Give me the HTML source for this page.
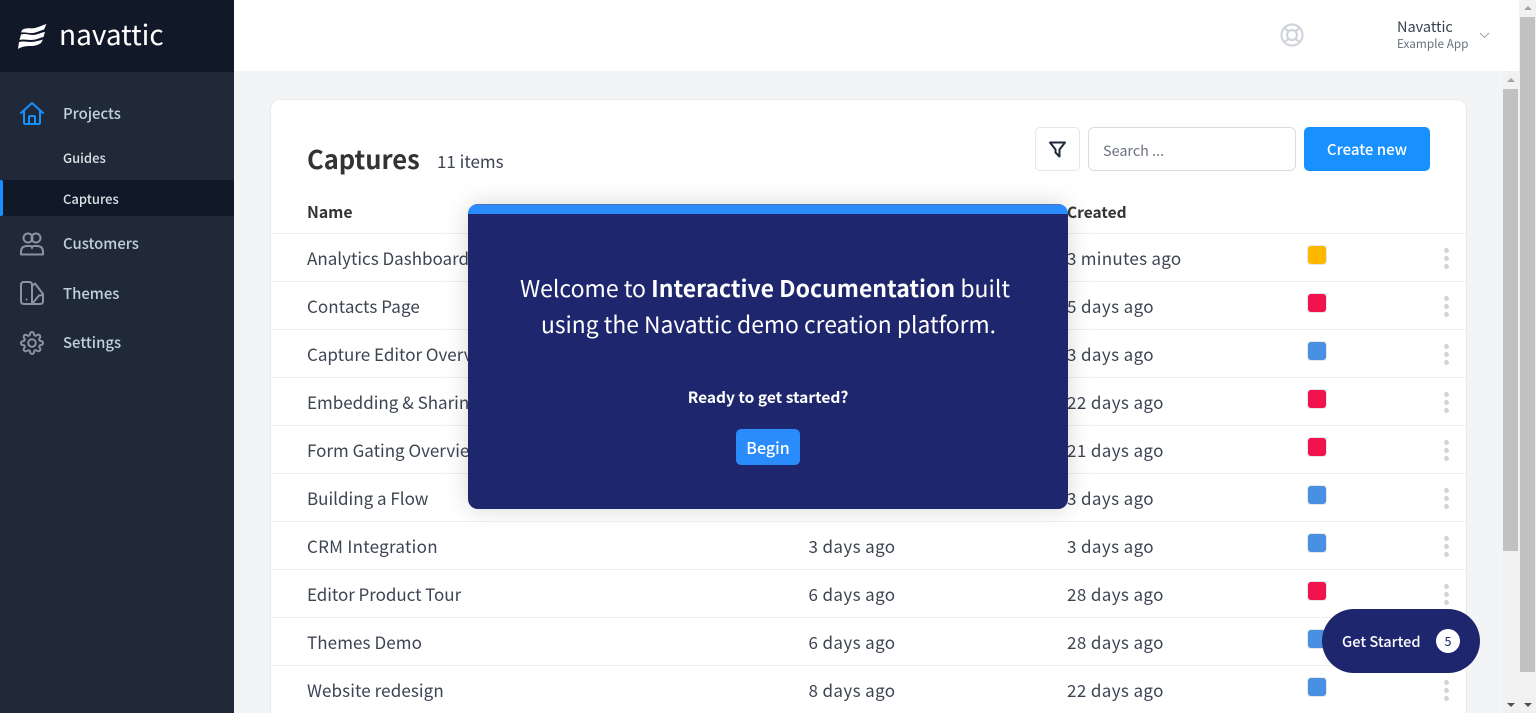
<!DOCTYPE html>
<html><head><meta charset="utf-8"><style>
*{box-sizing:border-box}
html,body{margin:0;padding:0;width:1536px;height:713px;overflow:hidden;background:#f3f4f6}
body{font-family:"Noto Sans CJK SC","Liberation Sans",sans-serif;position:relative}
.a{position:absolute;white-space:nowrap}
.nav{color:#c3d0dc;font-size:14.900px;font-weight:500;line-height:20px;left:63px}
.sub{color:#dbe2e8;font-size:13px;font-weight:500;line-height:18px;left:63px}
.t{color:#3d4451;font-size:17px;line-height:24px;left:307px}
.d{color:#3d4451;font-size:17px;line-height:24px;letter-spacing:.38px}
.l{position:absolute;left:271px;width:1195px;height:1px;background:#eff0f2}
.c{position:absolute;left:1307px;width:20px;height:20px;border-radius:4px;border:1px solid #e5e7eb}
.m{position:absolute;left:1443.5px;width:5px;height:5px;border-radius:50%;background:#d1d5db;box-shadow:0 8px 0 #d1d5db,0 16px 0 #d1d5db}
svg{position:absolute;overflow:visible}
</style></head><body>

<!-- sidebar -->
<div class="a" style="left:0;top:0;width:234px;height:713px;background:#1f2937"></div>
<div class="a" style="left:0;top:0;width:234px;height:72px;background:#111827"></div>
<svg style="left:18px;top:24px" width="29" height="25" viewBox="0 0 29 25" fill="#fff">
<path d="M4 6C8 3 13 5 17 4 21 3 25 1 28.500 0L26 5.500C21 7 17 9.500 12 9 9 8.700 6 8 3 8.500Z"/>
<path d="M3 10.500C7 9 11 11 15 11 19 11 23 8.500 27 8L25.500 13C21 14 18 16 13 16 9 16 5 15 1.500 16Z"/>
<path d="M1 18C5 17 9 18 13 18 17 18 21 16.500 25 15.500L23 19C20 21 17 22 12 22 7 22 3 23 0 25Z"/>
</svg>
<div class="a" style="left:59px;top:14px;color:#fff;font-size:28px;line-height:40px">navattic</div>

<svg style="left:20px;top:101px" width="24" height="24" viewBox="0 0 24 24" fill="none" stroke="#1890ff" stroke-width="2" stroke-linejoin="round" stroke-linecap="round">
<path d="M1 12L12 2 23 12"/><path d="M4 10V21.500Q4 23 5.500 23H18.500Q20 23 20 21.500V10"/><path d="M9 23V16.500Q9 15 10.500 15H13.500Q15 15 15 16.500V23"/>
</svg>
<div class="a nav" style="top:104px">Projects</div>
<div class="a sub" style="top:149px">Guides</div>
<div class="a" style="left:0;top:180px;width:234px;height:36px;background:#111827"></div>
<div class="a" style="left:0;top:180px;width:3px;height:36px;background:#1890ff;border-radius:0 2px 2px 0"></div>
<div class="a sub" style="top:190px">Captures</div>

<svg style="left:20px;top:232px" width="24" height="24" viewBox="0 0 24 24" fill="none" stroke="#8a949f" stroke-width="2" stroke-linejoin="round">
<circle cx="8" cy="6" r="4.500"/><circle cx="16" cy="6" r="4.500"/>
<path d="M1 22.500V20Q1 14 7 14H10Q12 14 12 16 12 14 14 14H17Q23 14 23 20V22.500Z"/>
</svg>
<div class="a nav" style="top:234px">Customers</div>

<svg style="left:20px;top:281px" width="24" height="24" viewBox="0 0 24 24" fill="none" stroke="#8a949f" stroke-width="2" stroke-linejoin="round">
<path d="M4 1H9Q12 1 12 4V23H4Q1 23 1 20V4Q1 1 4 1Z"/>
<path d="M12 5L15 2.500 23 13V20Q23 23 20 23H12"/><path d="M12 23L19 14.500 23 14"/>
<circle cx="6.500" cy="18.500" r="1" fill="#8a949f" stroke="none"/>
</svg>
<div class="a nav" style="top:284px">Themes</div>

<svg style="left:20px;top:331px" width="24" height="24" viewBox="0 0 24 24" fill="none" stroke="#8a949f" stroke-width="2" stroke-linejoin="round">
<circle cx="12" cy="12" r="3.800"/>
<path d="M19.400 15a1.650 1.650 0 0 0 .33 1.820l.06.06a2 2 0 0 1 0 2.830 2 2 0 0 1-2.830 0l-.06-.06a1.650 1.650 0 0 0-1.820-.33 1.650 1.650 0 0 0-1 1.510V21a2 2 0 0 1-2 2 2 2 0 0 1-2-2v-.09A1.650 1.650 0 0 0 9 19.400a1.650 1.650 0 0 0-1.820.33l-.06.06a2 2 0 0 1-2.830 0 2 2 0 0 1 0-2.830l.06-.06a1.650 1.650 0 0 0 .33-1.820 1.650 1.650 0 0 0-1.510-1H3a2 2 0 0 1-2-2 2 2 0 0 1 2-2h.09A1.650 1.650 0 0 0 4.600 9a1.650 1.650 0 0 0-.33-1.820l-.06-.06a2 2 0 0 1 0-2.830 2 2 0 0 1 2.830 0l.06.06a1.650 1.650 0 0 0 1.820.33H9a1.650 1.650 0 0 0 1-1.510V3a2 2 0 0 1 2-2 2 2 0 0 1 2 2v.09a1.650 1.650 0 0 0 1 1.510 1.650 1.650 0 0 0 1.820-.33l.06-.06a2 2 0 0 1 2.830 0 2 2 0 0 1 0 2.830l-.06.06a1.650 1.650 0 0 0-.33 1.820V9a1.650 1.650 0 0 0 1.510 1H21a2 2 0 0 1 2 2 2 2 0 0 1-2 2h-.09a1.650 1.650 0 0 0-1.510 1z"/>
</svg>
<div class="a nav" style="top:333px">Settings</div>

<!-- top bar -->
<div class="a" style="left:234px;top:0;width:1285px;height:71px;background:#fff"></div>
<svg style="left:1280px;top:23px" width="24" height="24" viewBox="0 0 24 24" fill="none" stroke="#d1d5db" stroke-width="2.200">
<circle cx="12" cy="12" r="10.500"/><circle cx="12" cy="12" r="5"/>
<path d="M4.500 4.500L8.500 8.500M19.500 4.500L15.500 8.500M4.500 19.500L8.500 15.500M19.500 19.500L15.500 15.500"/>
</svg>
<div class="a" style="left:1397px;top:17px;color:#374151;font-size:14.500px;line-height:20px">Navattic</div>
<div class="a" style="left:1397px;top:35px;color:#6b7280;font-size:11.800px;line-height:18px">Example App</div>
<svg style="left:1479px;top:32px" width="11" height="7" viewBox="0 0 11 7" fill="none" stroke="#9ca3af" stroke-width="1"><path d="M1 1L5.500 5.500 10 1"/></svg>

<!-- card -->
<div class="a" style="left:270px;top:99px;width:1197px;height:640px;background:#fff;border:1px solid #e9eaec;border-radius:10px"></div>
<div class="a" style="left:307px;top:141px;color:#333;font-size:25.500px;font-weight:700;line-height:36px">Captures</div>
<div class="a" style="left:437px;top:149px;color:#3d4451;font-size:17px;line-height:24px">11 items</div>

<div class="a" style="left:1035px;top:127px;width:45px;height:44px;border:1px solid #e5e7eb;border-radius:5px;background:#fff"></div>
<svg style="left:1049px;top:141px" width="17" height="17" viewBox="0 0 17 17" fill="none" stroke="#1f2937" stroke-width="2" stroke-linejoin="round"><path d="M1 1.500H16L10.500 8.500V15.500L6.500 11.500V8.500Z"/></svg>
<div class="a" style="left:1088px;top:127px;width:208px;height:44px;border:1px solid #d9dce1;border-radius:6px;background:#fff"></div>
<div class="a" style="left:1103px;top:140px;color:#6b7280;font-size:14.400px;line-height:22px">Search ...</div>
<div class="a" style="left:1304px;top:127px;width:126px;height:44px;border-radius:5px;background:#1890ff;color:#fff;font-size:15px;font-weight:500;line-height:46px;text-align:center">Create new</div>

<div class="a" style="left:307px;top:201px;color:#333;font-size:15.800px;font-weight:700;line-height:22px">Name</div>
<div class="a" style="left:1067px;top:201px;color:#333;font-size:15.500px;font-weight:700;line-height:22px">Created</div>

<div class="l" style="top:233px"></div><div class="l" style="top:281px"></div><div class="l" style="top:329px"></div><div class="l" style="top:377px"></div><div class="l" style="top:425px"></div><div class="l" style="top:473px"></div><div class="l" style="top:521px"></div><div class="l" style="top:569px"></div><div class="l" style="top:617px"></div><div class="l" style="top:665px"></div>

<div class="a t" style="top:246px">Analytics Dashboard</div><div class="a d" style="left:1067px;top:246px;letter-spacing:.27px">3 minutes ago</div>
<div class="a t" style="top:294px;letter-spacing:.08px">Contacts Page</div><div class="a d" style="left:1067px;top:294px">5 days ago</div>
<div class="a t" style="top:342px">Capture Editor Overview</div><div class="a d" style="left:1067px;top:342px">3 days ago</div>
<div class="a t" style="top:390px">Embedding &amp; Sharing</div><div class="a d" style="left:1067px;top:390px">22 days ago</div>
<div class="a t" style="top:438px">Form Gating Overview</div><div class="a d" style="left:1067px;top:438px">21 days ago</div>
<div class="a t" style="top:486px">Building a Flow</div><div class="a d" style="left:1067px;top:486px">3 days ago</div>
<div class="a t" style="top:534px;letter-spacing:.27px">CRM Integration</div><div class="a d" style="left:808.500px;top:534px">3 days ago</div><div class="a d" style="left:1067px;top:534px">3 days ago</div>
<div class="a t" style="top:582px;letter-spacing:-.05px">Editor Product Tour</div><div class="a d" style="left:808.500px;top:582px">6 days ago</div><div class="a d" style="left:1067px;top:582px">28 days ago</div>
<div class="a t" style="top:630px;letter-spacing:.09px">Themes Demo</div><div class="a d" style="left:808.500px;top:630px">6 days ago</div><div class="a d" style="left:1067px;top:630px">28 days ago</div>
<div class="a t" style="top:678px;letter-spacing:.1px">Website redesign</div><div class="a d" style="left:808.500px;top:678px">8 days ago</div><div class="a d" style="left:1067px;top:678px">22 days ago</div>

<div class="c" style="top:245px;background:#ffb800"></div><div class="m" style="top:248px"></div>
<div class="c" style="top:293px;background:#f0134d"></div><div class="m" style="top:296px"></div>
<div class="c" style="top:341px;background:#4a90e2"></div><div class="m" style="top:344px"></div>
<div class="c" style="top:389px;background:#f0134d"></div><div class="m" style="top:392px"></div>
<div class="c" style="top:437px;background:#f0134d"></div><div class="m" style="top:440px"></div>
<div class="c" style="top:485px;background:#4a90e2"></div><div class="m" style="top:488px"></div>
<div class="c" style="top:533px;background:#4a90e2"></div><div class="m" style="top:536px"></div>
<div class="c" style="top:581px;background:#f0134d"></div><div class="m" style="top:584px"></div>
<div class="c" style="top:629px;background:#4a90e2"></div><div class="m" style="top:632px"></div>
<div class="c" style="top:677px;background:#4a90e2"></div><div class="m" style="top:680px"></div>

<!-- scrollbars -->
<div class="a" style="left:1503px;top:71px;width:16px;height:642px;background:#f1f1f1"></div>
<div class="a" style="left:1503px;top:89px;width:15px;height:462px;background:#c1c1c1"></div>
<div class="a" style="left:1519px;top:0;width:17px;height:713px;background:#f1f1f1"></div>
<div class="a" style="left:1520px;top:17px;width:15px;height:655px;background:#c1c1c1"></div>
<svg style="left:1506px;top:77px" width="10" height="6"><path d="M1 5L5 1 9 5Z" fill="#a3a3a3"/></svg>
<svg style="left:1523px;top:5px" width="10" height="6"><path d="M1 5L5 1 9 5Z" fill="#a3a3a3"/></svg>
<svg style="left:1506px;top:702px" width="10" height="6"><path d="M1 1L5 5 9 1Z" fill="#505050"/></svg>
<svg style="left:1523px;top:702px" width="10" height="6"><path d="M1 1L5 5 9 1Z" fill="#505050"/></svg>

<!-- modal -->
<div class="a" style="left:468px;top:204px;width:600px;height:305px;background:#1e266d;border-radius:10px;box-shadow:0 0 24px rgba(0,0,0,.16);overflow:hidden">
<div style="height:10px;background:#2a8cfb;border-top:1px solid #4a76b8"></div>
</div>
<div class="a" style="left:465px;top:269px;width:600px;color:#fff;font-size:23px;line-height:37px;text-align:center">Welcome to <b style="font-weight:700">Interactive Documentation</b> built</div>
<div class="a" style="left:468.500px;top:305px;width:600px;color:#fff;font-size:22.850px;line-height:37px;text-align:center">using the Navattic demo creation platform.</div>
<div class="a" style="left:468px;top:386px;width:600px;color:#fff;font-size:15.500px;font-weight:700;line-height:22px;text-align:center">Ready to get started?</div>
<div class="a" style="left:736px;top:429px;width:64px;height:36px;border-radius:5px;background:#2a8cfb;color:#fff;font-size:16px;font-weight:500;line-height:37px;text-align:center">Begin</div>

<!-- get started -->
<div class="a" style="left:1322px;top:608.500px;width:158px;height:64px;border-radius:32px;background:#1e266d"></div>
<div class="a" style="left:1342px;top:631px;color:#fff;font-size:14.600px;font-weight:500;line-height:22px">Get Started</div>
<div class="a" style="left:1436px;top:629px;width:24px;height:24px;border-radius:50%;background:#fff;color:#1e266d;font-size:12.500px;line-height:24px;text-align:center">5</div>

</body></html>
